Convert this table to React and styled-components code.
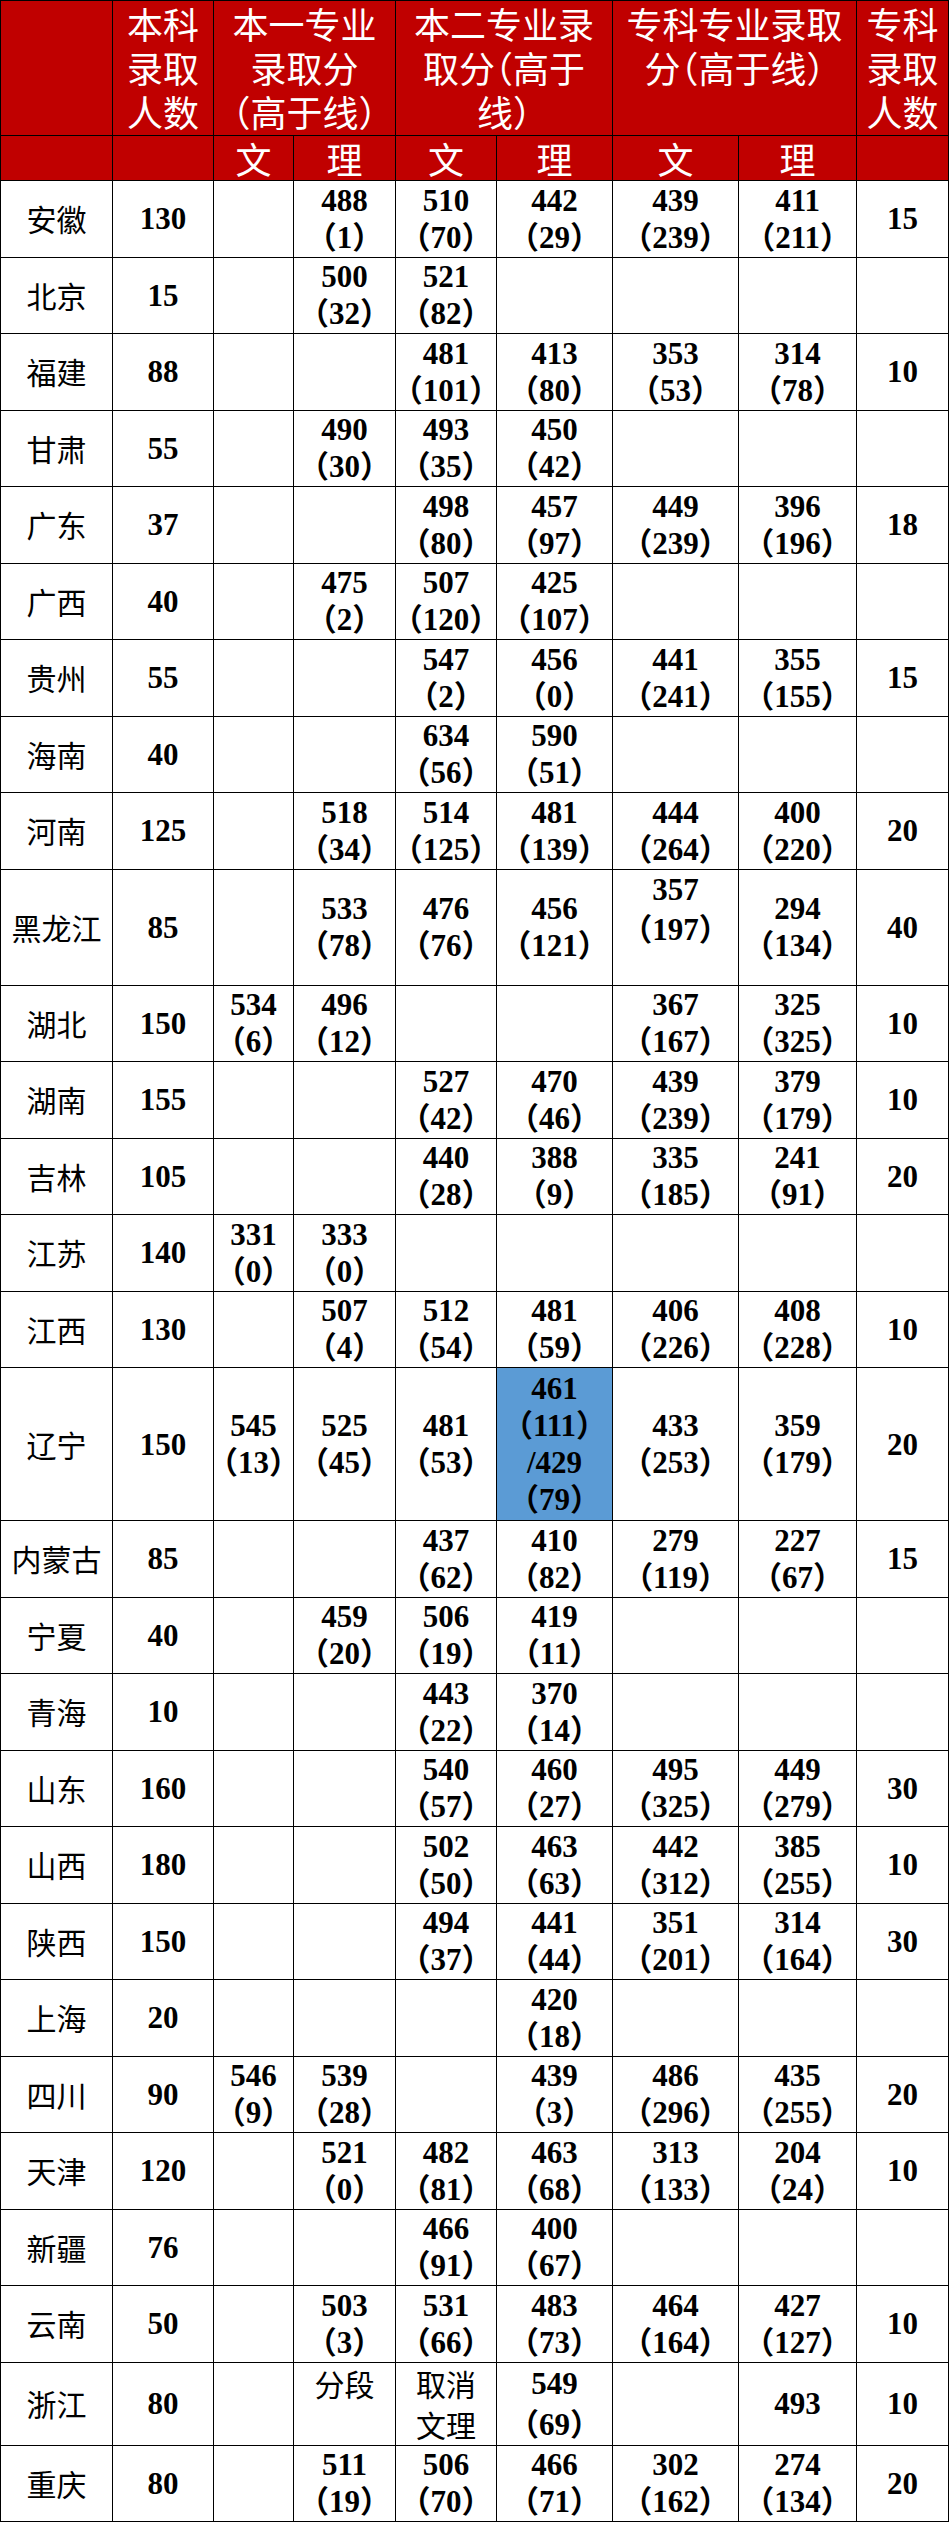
import React from "react";
import styled, { createGlobalStyle } from "styled-components";

const GlobalStyle = createGlobalStyle`
  html, body {
    margin: 0;
    padding: 0;
    background: #fff;
  }
`;

const Table = styled.table`
  border-collapse: collapse;
  table-layout: fixed;
  width: 949px;
  font-feature-settings: "halt";
`;

const Row = styled.tr`
  height: ${(p) => p.$h}px;
`;

const HeadCell = styled.th`
  background: #c00000;
  color: #fff;
  border: 1px solid #000;
  padding: 0;
  font-family: "Noto Sans CJK SC", sans-serif;
  font-weight: 400;
  font-size: 36px;
  line-height: 44px;
  text-align: center;
  vertical-align: ${(p) => (p.$mid ? "middle" : "top")};
  white-space: pre-line;
`;

const Cell = styled.td`
  border: 1px solid #000;
  padding: 0;
  color: #000;
  background: ${(p) => (p.$hl ? "#5b9bd5" : "#fff")};
  text-align: center;
  vertical-align: ${(p) => (p.$top ? "top" : "middle")};
  font-family: ${(p) =>
    p.$cjk
      ? '"Noto Sans CJK SC", sans-serif'
      : '"Liberation Serif", "Noto Sans CJK SC", serif'};
  font-weight: ${(p) => (p.$cjk ? 400 : 700)};
  font-size: ${(p) => (p.$cjk ? 30 : 31)}px;
  line-height: ${(p) => p.$lh || 37}px;
  white-space: pre-line;
`;

const widths = [112, 101, 80, 102, 101, 116, 126, 118, 92];

const rows = [
  ["安徽", "130", "", "488（1）", "510（70）", "442（29）", "439（239）", "411（211）", "15"],
  ["北京", "15", "", "500（32）", "521（82）", "", "", "", ""],
  ["福建", "88", "", "", "481（101）", "413（80）", "353（53）", "314（78）", "10"],
  ["甘肃", "55", "", "490（30）", "493（35）", "450（42）", "", "", ""],
  ["广东", "37", "", "", "498（80）", "457（97）", "449（239）", "396（196）", "18"],
  ["广西", "40", "", "475（2）", "507（120）", "425（107）", "", "", ""],
  ["贵州", "55", "", "", "547（2）", "456（0）", "441（241）", "355（155）", "15"],
  ["海南", "40", "", "", "634（56）", "590（51）", "", "", ""],
  ["河南", "125", "", "518（34）", "514（125）", "481（139）", "444（264）", "400（220）", "20"],
  ["黑龙江", "85", "", "533（78）", "476（76）", "456（121）", "357（197）", "294（134）", "40"],
  ["湖北", "150", "534（6）", "496（12）", "", "", "367（167）", "325（325）", "10"],
  ["湖南", "155", "", "", "527（42）", "470（46）", "439（239）", "379（179）", "10"],
  ["吉林", "105", "", "", "440（28）", "388（9）", "335（185）", "241（91）", "20"],
  ["江苏", "140", "331（0）", "333（0）", "", "", "", "", ""],
  ["江西", "130", "", "507（4）", "512（54）", "481（59）", "406（226）", "408（228）", "10"],
  ["辽宁", "150", "545（13）", "525（45）", "481（53）", "461（111）/429（79）", "433（253）", "359（179）", "20"],
  ["内蒙古", "85", "", "", "437（62）", "410（82）", "279（119）", "227（67）", "15"],
  ["宁夏", "40", "", "459（20）", "506（19）", "419（11）", "", "", ""],
  ["青海", "10", "", "", "443（22）", "370（14）", "", "", ""],
  ["山东", "160", "", "", "540（57）", "460（27）", "495（325）", "449（279）", "30"],
  ["山西", "180", "", "", "502（50）", "463（63）", "442（312）", "385（255）", "10"],
  ["陕西", "150", "", "", "494（37）", "441（44）", "351（201）", "314（164）", "30"],
  ["上海", "20", "", "", "", "420（18）", "", "", ""],
  ["四川", "90", "546（9）", "539（28）", "", "439（3）", "486（296）", "435（255）", "20"],
  ["天津", "120", "", "521（0）", "482（81）", "463（68）", "313（133）", "204（24）", "10"],
  ["新疆", "76", "", "", "466（91）", "400（67）", "", "", ""],
  ["云南", "50", "", "503（3）", "531（66）", "483（73）", "464（164）", "427（127）", "10"],
  ["浙江", "80", "", "分段", "取消\n文理", "549（69）", "", "493", "10"],
  ["重庆", "80", "", "511（19）", "506（70）", "466（71）", "302（162）", "274（134）", "20"],
];

// cells that don't follow the usual layout
const special = {
  黑龙江: { h: 116, 6: { top: true, lh: 40 } },
  辽宁: { h: 153, 5: { hl: true } },
  浙江: {
    3: { top: true, cjk: true, lh: 41 },
    4: { top: true, cjk: true, lh: 41 },
    5: { top: true, lh: 41 },
  },
};

const fmt = (s) => s.replace(/（/g, "\n（").replace(/\//g, "\n/").replace(/^\n/, "");

export default function App() {
  return (
    <>
      <GlobalStyle />
      <Table>
        <colgroup>
          {widths.map((w, i) => (
            <col key={i} style={{ width: w }} />
          ))}
        </colgroup>
        <thead>
          <Row $h={135}>
            <HeadCell />
            <HeadCell>{"本科\n录取\n人数"}</HeadCell>
            <HeadCell colSpan={2}>{"本一专业\n录取分\n（高于线）"}</HeadCell>
            <HeadCell colSpan={2}>{"本二专业录\n取分（高于\n线）"}</HeadCell>
            <HeadCell colSpan={2}>{"专科专业录取\n分（高于线）"}</HeadCell>
            <HeadCell>{"专科\n录取\n人数"}</HeadCell>
          </Row>
          <Row $h={45}>
            <HeadCell $mid />
            <HeadCell $mid />
            <HeadCell $mid>文</HeadCell>
            <HeadCell $mid>理</HeadCell>
            <HeadCell $mid>文</HeadCell>
            <HeadCell $mid>理</HeadCell>
            <HeadCell $mid>文</HeadCell>
            <HeadCell $mid>理</HeadCell>
            <HeadCell $mid />
          </Row>
        </thead>
        <tbody>
          {rows.map((r) => {
            const sp = special[r[0]] || {};
            return (
              <Row key={r[0]} $h={sp.h || 76.5}>
                {r.map((v, i) => {
                  const o = sp[i] || {};
                  return (
                    <Cell
                      key={i}
                      $cjk={i === 0 || o.cjk}
                      $top={o.top}
                      $hl={o.hl}
                      $lh={o.lh}
                    >
                      {i === 0 ? v : fmt(v)}
                    </Cell>
                  );
                })}
              </Row>
            );
          })}
        </tbody>
      </Table>
    </>
  );
}
